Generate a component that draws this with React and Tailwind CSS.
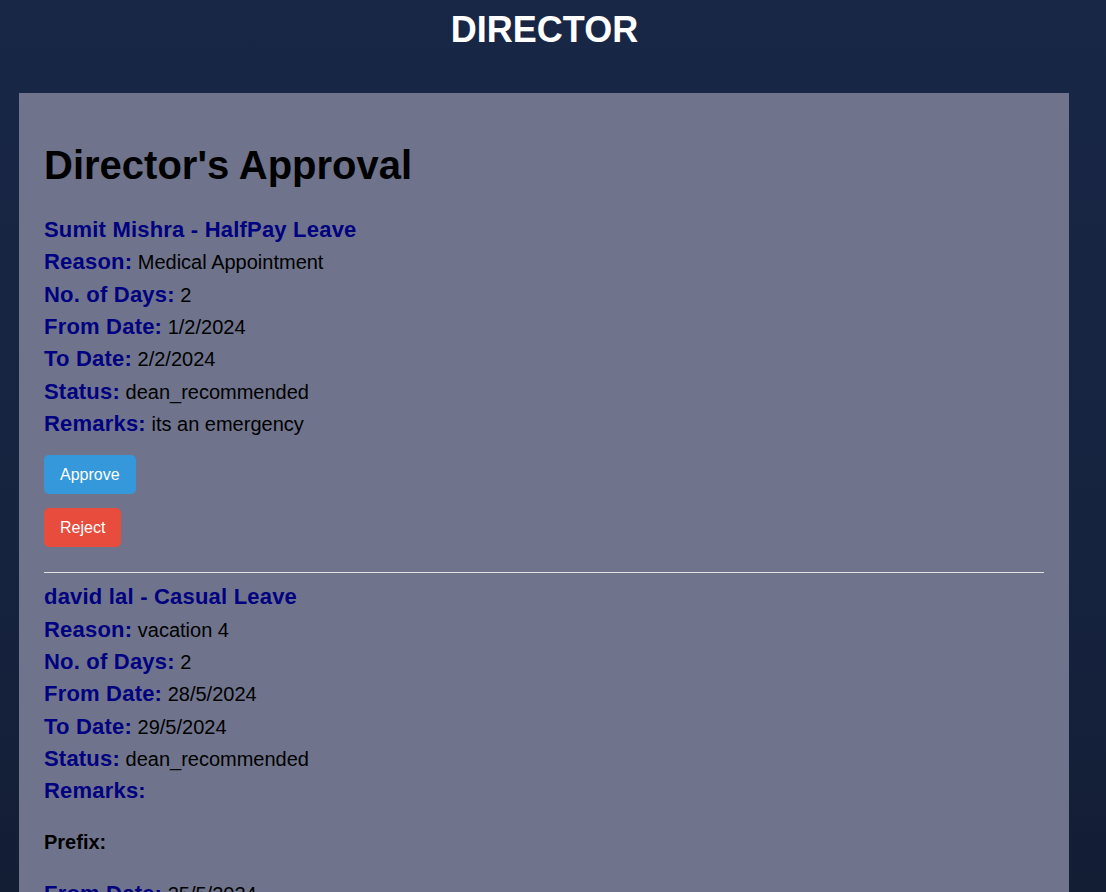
const requests = [
  {
    name: 'Sumit Mishra',
    type: 'HalfPay Leave',
    reason: 'Medical Appointment',
    days: 2,
    from: '1/2/2024',
    to: '2/2/2024',
    status: 'dean_recommended',
    remarks: 'its an emergency',
  },
  {
    name: 'david lal',
    type: 'Casual Leave',
    reason: 'vacation 4',
    days: 2,
    from: '28/5/2024',
    to: '29/5/2024',
    status: 'dean_recommended',
    remarks: '',
    prefix: { from: '25/5/2024', to: '27/5/2024' },
  },
];

const Row = ({ label, children }) => (
  <div className="text-[20px] leading-[32.33px] text-black">
    <span className="text-[22px] font-bold tracking-[0.2px] text-[#000080]">{label}</span> {children}
  </div>
);

const LeaveItem = ({ item, last }) => (
  <div className={last ? '' : 'pb-[25px] border-b border-[#e2e2e2] mb-[8px]'}>
    <div className="text-[22px] leading-[32.33px] font-bold tracking-[0.2px] text-[#000080]">
      {item.name} - {item.type}
    </div>
    <Row label="Reason:">{item.reason}</Row>
    <Row label="No. of Days:">{item.days}</Row>
    <Row label="From Date:">{item.from}</Row>
    <Row label="To Date:">{item.to}</Row>
    <Row label="Status:">{item.status}</Row>
    <Row label="Remarks:">{item.remarks}</Row>

    {item.prefix && (
      <>
        <p className="mt-[23px] text-[20px] leading-[23px] font-bold text-black">Prefix:</p>
        <div className="mt-[24px]">
          <Row label="From Date:">{item.prefix.from}</Row>
          <Row label="To Date:">{item.prefix.to}</Row>
        </div>
      </>
    )}

    <div className="mt-[15px] flex flex-col items-start gap-[14px]">
      <button className="h-[39px] rounded-[5px] bg-[#3498db] px-4 text-[16px] leading-[19px] text-white">
        Approve
      </button>
      <button className="h-[39px] rounded-[5px] bg-[#e74c3c] px-4 text-[16px] leading-[19px] text-white">
        Reject
      </button>
    </div>
  </div>
);

export default function App() {
  return (
    <div
      className="min-h-screen bg-gradient-to-b from-[#182746] via-[#16233f] to-[#111a2e] pb-10"
      style={{ fontFamily: '"Liberation Sans", Arial, sans-serif' }}
    >
      <header className="pr-[17px] pt-[9px]">
        <h1 className="text-center text-[36px] leading-[41px] font-bold text-white">DIRECTOR</h1>
      </header>

      <main className="ml-[19px] mt-[43px] w-[1050px] bg-[#6f748c] px-[25px] pt-[49px] pb-[30px]">
        <h2 className="text-[40px] leading-[46px] font-bold text-black">Director's Approval</h2>
        <div className="mt-[26px]">
          {requests.map((r, i) => (
            <LeaveItem key={r.name} item={r} last={i === requests.length - 1} />
          ))}
        </div>
      </main>
    </div>
  );
}
